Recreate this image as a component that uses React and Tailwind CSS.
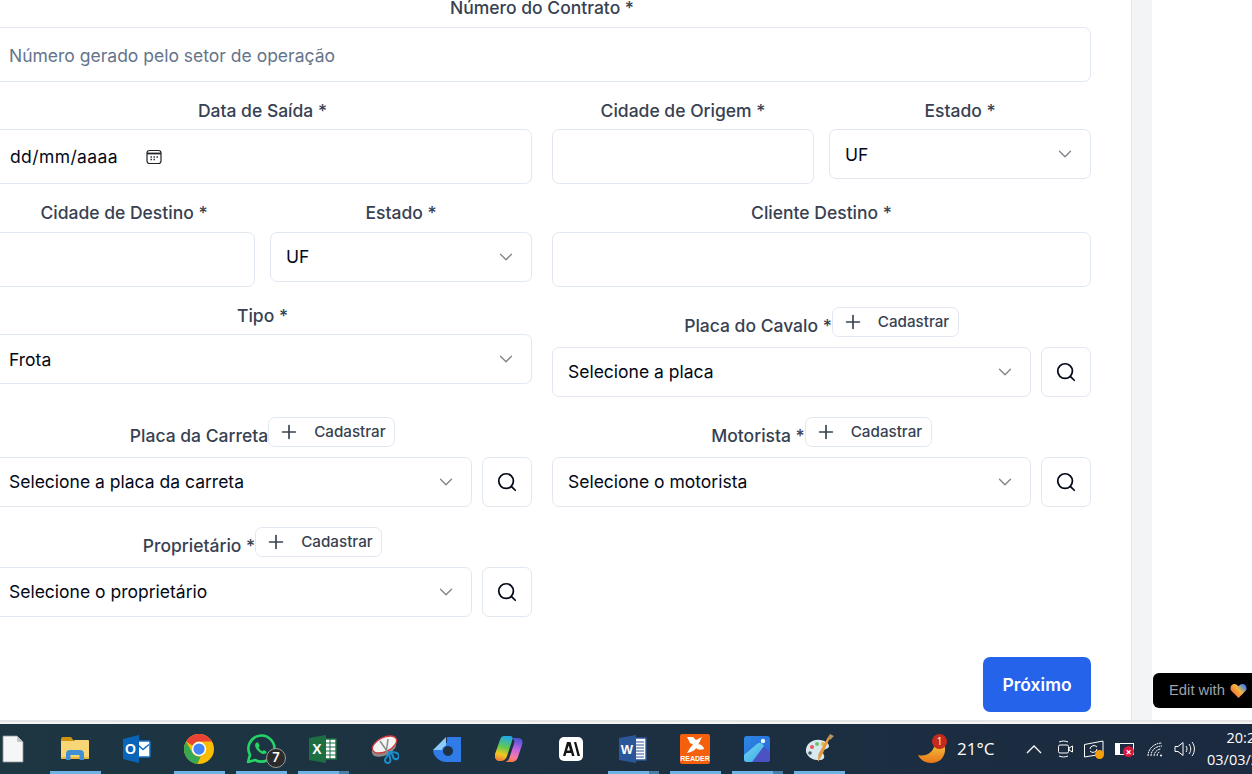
import React from "react";
import { ChevronDown, Plus, Search } from "lucide-react";

const Label = ({ children }) => (
  <label className="block h-6 text-center text-[17.5px] font-medium leading-6 text-[#374151]">{children}</label>
);
const Field = ({ placeholder }) => (
  <div className="flex h-[55px] items-center rounded-[7px] border border-[#e2e8f0] bg-white px-[15px] pt-[3px] text-[17.5px]">
    <span className="text-[#64748b]">{placeholder}</span>
  </div>
);
const Select = ({ value, shift }) => (
  <div className="flex h-[50px] min-w-0 flex-1 items-center justify-between rounded-[7px] border border-[#e2e8f0] bg-white pl-[15px] pr-[14px] text-[17.5px] text-[#020817]">
    <span className={shift ? "pt-[2px]" : ""}>{value}</span>
    <ChevronDown className="h-[22px] w-[22px] text-[#020817] opacity-50" strokeWidth={1.4} />
  </div>
);
const Cadastrar = () => (
  <div className="flex h-[30px] w-[127px] shrink-0 items-center gap-[14px] rounded-[7px] border border-[#e2e8f0] bg-white pl-[9px] text-[15.2px] font-medium text-[#374151]">
    <Plus className="h-[22px] w-[22px]" strokeWidth={1.8} />
    <span>Cadastrar</span>
  </div>
);
const SearchSelect = ({ label, value }) => (
  <div>
    <div className="flex h-[30px] items-start justify-center">
      <label className="mt-[7px] h-6 text-[17.5px] font-medium leading-6 text-[#374151]">{label}</label>
      <Cadastrar />
    </div>
    <div className="mt-[10px] flex gap-[10px]">
      <Select value={value} />
      <div className="flex h-[50px] w-[50px] shrink-0 items-center justify-center rounded-[7px] border border-[#e2e8f0] bg-white">
        <Search className="h-[22px] w-[22px] text-[#020817]" strokeWidth={1.9} />
      </div>
    </div>
  </div>
);

const Slot = ({ children, bar }) => (
  <div className="relative flex h-full w-[62px] shrink-0 items-center justify-center">
    {children}
    {bar && (
      <div className="absolute bottom-0 left-[6px] flex h-[3px]">
        <div className={bar === 2 ? "w-[41px] bg-[#6fb3e6]" : "w-[51px] bg-[#6fb3e6]"} />
        {bar === 2 && <div className="w-[10px] bg-[#4a7ea6]" />}
      </div>
    )}
  </div>
);

const Icons = {
  file: (
    <svg width="22" height="28" viewBox="0 0 22 28">
      <path d="M1 1h14l6 6v20H1z" fill="#f6f6f6" stroke="#8f979b" strokeWidth=".8" />
      <path d="M15 1l6 6h-6z" fill="#c4c4c4" />
    </svg>
  ),
  folder: (
    <svg width="28" height="24" viewBox="0 0 28 24">
      <path d="M0 2a2 2 0 0 1 2-2h8l3 4H0z" fill="#cf9414" />
      <path d="M0 4l12 0 2-1h13a1 1 0 0 1 1 1v18H0z" fill="#f8d675" />
      <path d="M0 20h28v2H0z" fill="#e8b93f" />
      <path d="M5 23v-6a4 4 0 0 1 4-4h10a4 4 0 0 1 4 4v6h-4.500v-5h-9v5z" fill="#3f8fd6" />
    </svg>
  ),
  outlook: (
    <svg width="28" height="28" viewBox="0 0 28 28">
      <rect x="13" y="6" width="14" height="16" rx="1" fill="#fff" stroke="#1170c4" strokeWidth="1.500" />
      <path d="M15 10l5 4.500 6-5" fill="none" stroke="#1170c4" strokeWidth="1.500" />
      <path d="M0 4l16-4v28L0 24z" fill="#0a64b8" />
      <text x="7.500" y="19" textAnchor="middle" fontSize="14" fontWeight="700" fill="#fff" fontFamily="'Liberation Sans', sans-serif">O</text>
    </svg>
  ),
  chrome: (
    <svg width="30" height="30" viewBox="0 0 48 48">
      <circle cx="24" cy="24" r="24" fill="#fbbc04" />
      <path d="M24 0a24 24 0 0 1 20.800 12H24a12 12 0 0 0-10.600 6.400L3.200 12A24 24 0 0 1 24 0z" fill="#ea4335" />
      <path d="M3.200 12l10.400 18A12 12 0 0 0 27 35.600L21 47.800A24 24 0 0 1 3.200 12z" fill="#34a853" />
      <circle cx="24" cy="24" r="11.500" fill="#fff" />
      <circle cx="24" cy="24" r="9" fill="#4285f4" />
    </svg>
  ),
  whatsapp: (
    <svg width="30" height="30" viewBox="0 0 30 30">
      <path d="M2 28l2-7.200A13 13 0 1 1 9.200 26z" fill="none" stroke="#25d366" strokeWidth="2.600" strokeLinejoin="round" />
      <path d="M10.500 8.500c-1.500 1-2 3-.6 5.600 1.400 2.600 4 5 6.800 5.800 1.800.5 3.600-.3 4.300-1.800l-3.100-2-1.500 1.200c-1.600-.6-3-2.100-3.800-3.800l1.200-1.500-1.700-3.500z" fill="#25d366" />
    </svg>
  ),
  excel: (
    <svg width="28" height="28" viewBox="0 0 28 28">
      <path d="M15 4h12v20H15z" fill="#fff" stroke="#1d7044" strokeWidth="1.400" />
      <path d="M21 4v20M15 8h12M15 12h12M15 16h12M15 20h12" stroke="#1d7044" strokeWidth="1" />
      <path d="M0 3l17-3v28L0 25z" fill="#1d6f42" />
      <text x="8" y="19" textAnchor="middle" fontSize="14" fontWeight="700" fill="#fff" fontFamily="'Liberation Sans', sans-serif">X</text>
    </svg>
  ),
  snip: (
    <svg width="28" height="29" viewBox="0 0 28 29">
      <ellipse cx="13" cy="13" rx="13" ry="7.500" transform="rotate(-26 13 13)" fill="#8b8b8b" />
      <ellipse cx="13.500" cy="9.500" rx="13" ry="7" transform="rotate(-26 13.500 9.500)" fill="#f4f4f4" stroke="#d23a3a" strokeWidth="1.300" />
      <path d="M9 6l9 13M17 4l-2 15" stroke="#8a8a8a" strokeWidth="1.500" />
      <path d="M18 18l-3 5a2.800 2.800 0 1 0 4.500 2.500zM19 17l3 3.500a3 3 0 1 0 4.500 -2c-1.500-1.500-5-1.500-7.500-1.500z" fill="none" stroke="#1c8ecf" strokeWidth="2" />
    </svg>
  ),
  dash: (
    <svg width="28" height="25" viewBox="0 0 28 25">
      <path fillRule="evenodd" d="M14 0H28V25H13A13 13 0 0 1 0 12.500H8L14 5zM15 9a5 5 0 1 0 .01 0z" fill="#2f7be8" />
      <path d="M0 13L13 0V8.500A6 6 0 0 0 9 13z" fill="#8ccaf9" />
    </svg>
  ),
  copilot: (
    <svg width="28" height="26" viewBox="0 0 28 26">
      <defs>
        <linearGradient id="cpa" x1=".6" y1="0" x2=".4" y2="1"><stop offset="0" stopColor="#1fa8e8" /><stop offset=".45" stopColor="#62c850" /><stop offset=".75" stopColor="#f4c81e" /><stop offset="1" stopColor="#f0813a" /></linearGradient>
        <linearGradient id="cpb" x1=".6" y1="0" x2=".4" y2="1"><stop offset="0" stopColor="#4b54d8" /><stop offset=".45" stopColor="#c564e0" /><stop offset=".8" stopColor="#f77da0" /><stop offset="1" stopColor="#f7773a" /></linearGradient>
      </defs>
      <path d="M17 2H23C27 2 28.500 5 27 9L23 21C22 24 20 26 16 26H9C12 26 14 24 15 20L19 8C20 5 19 3 17 2Z" fill="url(#cpb)" />
      <path d="M9 0H15C18 0 18 2 17 5L12 20C11 24 8 25 5 25H4C1 25 -1 22 0 18L5 4C6 1 7 0 9 0Z" fill="url(#cpa)" />
    </svg>
  ),
  anthropic: (
    <div className="flex h-6 w-6 items-center justify-center rounded-[5px] bg-white">
      <svg width="17" height="14" viewBox="0 0 17 14">
        <path fillRule="evenodd" d="M4 0h3.500l4 14H9l-.8-3H3.300l-.8 3H0zM5.700 3.500L4 8.500h3zM11 0h2.200L17 14h-2.500z" fill="#141413" />
      </svg>
    </div>
  ),
  word: (
    <svg width="28" height="28" viewBox="0 0 28 28">
      <path d="M14 3h13v22H14z" fill="#fff" stroke="#2b579a" strokeWidth="1.400" />
      <path d="M17 7h8M17 10h8M17 13h8M17 16h8M17 19h8M17 22h8" stroke="#2b579a" strokeWidth="1.200" />
      <path d="M0 3l17-3v28L0 25z" fill="#2b579a" />
      <text x="8" y="19" textAnchor="middle" fontSize="13" fontWeight="700" fill="#fff" fontFamily="'Liberation Sans', sans-serif">W</text>
    </svg>
  ),
  reader: (
    <div className="relative h-[30px] w-[30px] overflow-hidden rounded-[2px] bg-[#f4600c]">
      <svg width="30" height="21" viewBox="0 0 30 21" className="absolute left-0 top-0">
        <path d="M7 3h6l3 3 6-3-3 6c-2 6-6 9-12 10l3-5 3-3.500-3-1.500zM19 10c3 1 5 3 5 5-3 1-6 1-8-1z" fill="#fff" />
      </svg>
      <div className="absolute bottom-[1px] left-0 w-full text-center text-[7px] font-bold leading-[9px] text-white" style={{ fontFamily: "'Liberation Sans', sans-serif" }}>READER</div>
    </div>
  ),
  photos: (
    <svg width="26" height="26" viewBox="0 0 26 26">
      <defs>
        <linearGradient id="ph" x1="0" y1="0" x2="1" y2="1"><stop offset="0" stopColor="#2a8ae6" /><stop offset="1" stopColor="#2d62d4" /></linearGradient>
        <linearGradient id="ph2" x1="0" y1="0" x2="1" y2="1"><stop offset="0" stopColor="#7fd7f7" /><stop offset="1" stopColor="#2fa8e0" /></linearGradient>
      </defs>
      <rect width="26" height="26" rx="3" fill="url(#ph)" />
      <circle cx="19" cy="5" r="2.200" fill="#e9f4fd" />
      <path d="M17 8l9 8v7a3 3 0 0 1-3 3H8z" fill="#4a52c4" />
      <path d="M0 19L13 8q3-2.500 5.500 0L20 10 8 26H3a3 3 0 0 1-3-3z" fill="url(#ph2)" />
    </svg>
  ),
  paint: (
    <svg width="29" height="30" viewBox="0 0 29 30">
      <path d="M1 18C0 10 8 5 15 6c5 .7 9 3 9 6 0 4-6 2-6 6 0 3 2 3 1 6-2 4-15 3-18-6z" fill="#d8e8f1" />
      <circle cx="7" cy="13" r="2" fill="#e8584d" />
      <circle cx="12" cy="10" r="2" fill="#6cc070" />
      <circle cx="5" cy="19" r="1.800" fill="#4a5f6b" />
      <circle cx="18" cy="10" r="2" fill="#f1b63a" />
      <path d="M25 4L17 21l-4 7 .5-8L23 3z" fill="#e8993b" />
      <path d="M23 3l2-3 4 2-4 4z" fill="#b9915c" />
    </svg>
  ),
};

function Taskbar() {
  return (
    <div className="flex h-[50px] items-stretch overflow-hidden bg-gradient-to-r from-[#1d3642] to-[#1b2a40]">
      <div className="-ml-[18px] flex w-[868px] shrink-0">
        <Slot>{Icons.file}</Slot>
        <Slot bar={1}>{Icons.folder}</Slot>
        <Slot>{Icons.outlook}</Slot>
        <Slot bar={1}>{Icons.chrome}</Slot>
        <Slot bar={1}>
          {Icons.whatsapp}
          <div className="absolute left-[36px] top-[24px] flex h-5 w-5 items-center justify-center rounded-full border border-[#9a9a9a] bg-[#2b2b2b] text-[13px] font-semibold text-white">7</div>
        </Slot>
        <Slot bar={2}>{Icons.excel}</Slot>
        <Slot>{Icons.snip}</Slot>
        <Slot>{Icons.dash}</Slot>
        <Slot>{Icons.copilot}</Slot>
        <Slot>{Icons.anthropic}</Slot>
        <Slot bar={2}>{Icons.word}</Slot>
        <Slot bar={1}>{Icons.reader}</Slot>
        <Slot bar={2}>{Icons.photos}</Slot>
        <Slot bar={1}>{Icons.paint}</Slot>
      </div>
      <div className="ml-[68px] flex items-center text-white" style={{ fontFamily: "'Open Sans', sans-serif" }}>
        <div className="relative h-7 w-7">
          <svg width="28" height="28" viewBox="0 0 28 28">
            <defs><linearGradient id="mn" x1="0" y1="0" x2="0" y2="1"><stop offset="0" stopColor="#f4c33b" /><stop offset="1" stopColor="#e8751a" /></linearGradient></defs>
            <path d="M0 20C8 22 15 18 17 9L26 9C29 16 26 28 13 28C6 28 2 24 0 20Z" fill="url(#mn)" />
          </svg>
          <div className="absolute left-[14px] top-[-1px] flex h-[15px] w-[15px] items-center justify-center rounded-full bg-[#c42b1c] text-[10px] text-white">1</div>
        </div>
        <span className="ml-[11px] w-[38px] shrink-0 text-[17px]">21°C</span>
        <svg className="ml-[31px] shrink-0" width="16" height="10" viewBox="0 0 16 10"><path d="M1 9l7-7 7 7" fill="none" stroke="#fff" strokeWidth="1.300" /></svg>
        <svg className="ml-[16px] shrink-0" width="15" height="18" viewBox="0 0 15 18" fill="none" stroke="#fff" strokeWidth="1">
          <rect x="0.500" y="5" width="10" height="8" rx="1.500" />
          <path d="M11 8l3.500-2v6L11 10zM1 2c3-1.300 6-1.300 9 0M1 16c3 1.300 6 1.300 9 0" />
        </svg>
        <div className="relative ml-[11px] h-[18px] w-[20px] shrink-0">
          <svg width="20" height="18" viewBox="0 0 20 18" fill="none" stroke="#fff" strokeWidth="1">
            <path d="M0.500 4.500L19 1v13L0.500 17z" />
            <path d="M6 9a4 4 0 0 1 7-2M13 9a4 4 0 0 1-7 2" />
          </svg>
          <div className="absolute left-[11px] top-[10px] h-[9px] w-[9px] rounded-full bg-[#f59e0b]" />
        </div>
        <div className="relative ml-[11px] h-[12px] w-[19px] shrink-0 border border-white">
          <div className="h-full w-[4px] bg-white" />
          <div className="absolute left-[7px] top-[2px] flex h-[11px] w-[11px] items-center justify-center rounded-full bg-[#d6173b] text-[10px] font-bold leading-none">×</div>
        </div>
        <svg className="ml-[13px] shrink-0" width="17" height="15" viewBox="0 0 17 15" fill="none" stroke="#fff" strokeWidth="1">
          <path d="M1 14C1 7 7 1 15 1M4 14c0-5 4-10 11-10M7 14c0-3 3-7 7-7M10 14c0-2 1-4 3-4" strokeDasharray="2 .6" />
          <circle cx="14" cy="13.500" r="1" fill="#fff" stroke="none" />
        </svg>
        <svg className="ml-[10px] shrink-0" width="21" height="18" viewBox="0 0 21 18" fill="none" stroke="#fff" strokeWidth="1">
          <path d="M1 6.500h3L9 2.500v13l-5-4H1zM12 6c1.300 1.800 1.300 4.200 0 6M15 4c2.300 3 2.300 7 0 10M18 2c3.200 4 3.200 10 0 14" />
        </svg>
        <div className="ml-[12px] w-[76px] shrink-0 text-center text-[14.5px] leading-[22px]">
          <div>20:25</div>
          <div>03/03/2025</div>
        </div>
      </div>
    </div>
  );
}

export default function App() {
  return (
    <div className="relative h-[774px] w-[1252px] overflow-hidden bg-white" style={{ fontFamily: "Inter, sans-serif" }}>
      <div className="flex h-[720px]">
        <div className="w-[1131px] shrink-0 overflow-hidden bg-white">
          <div className="-ml-[7px] -mt-[4px] w-[1098px]">
            <div>
              <Label>Número do Contrato *</Label>
              <div className="mt-[7px]"><Field placeholder="Número gerado pelo setor de operação" /></div>
            </div>
            <div className="mt-[17px] grid grid-cols-2 gap-x-5">
              <div>
                <Label>Data de Saída *</Label>
                <div className="mt-[6px] flex h-[55px] items-center gap-[28px] rounded-[7px] border border-[#e2e8f0] bg-white pl-[16px] text-[17.5px] tracking-[0.4px] text-[#020817]">
                  <span className="pt-[2px]">dd/mm/aaaa</span>
                  <svg width="16" height="16" viewBox="0 0 16 16" fill="none">
                    <rect x="1" y="1.500" width="14" height="13" rx="2.500" stroke="#1f2328" strokeWidth="1.200" />
                    <path d="M1 4.500h14" stroke="#1f2328" strokeWidth="1.800" />
                    <path d="M4.500 8h1.400M7.500 8h1.400M10.500 8h1.400M4.500 10.500h1.400M7.500 10.500h1.400" stroke="#1f2328" strokeWidth="1.300" />
                  </svg>
                </div>
              </div>
              <div className="flex gap-[15px]">
                <div className="w-[262px]">
                  <Label>Cidade de Origem *</Label>
                  <div className="mt-[6px]"><Field /></div>
                </div>
                <div className="flex-1">
                  <Label>Estado *</Label>
                  <div className="mt-[6px] flex"><Select value="UF" shift /></div>
                </div>
              </div>
            </div>
            <div className="mt-[17px] grid grid-cols-2 gap-x-5">
              <div className="flex gap-[15px]">
                <div className="w-[262px]">
                  <Label>Cidade de Destino *</Label>
                  <div className="mt-[7px]"><Field /></div>
                </div>
                <div className="flex-1">
                  <Label>Estado *</Label>
                  <div className="mt-[7px] flex"><Select value="UF" /></div>
                </div>
              </div>
              <div>
                <Label>Cliente Destino *</Label>
                <div className="mt-[7px]"><Field /></div>
              </div>
            </div>
            <div className="mt-[17px] grid grid-cols-2 gap-x-5 gap-y-[20px]">
              <div>
                <Label>Tipo *</Label>
                <div className="mt-[6px] flex"><Select value="Frota" shift /></div>
              </div>
              <div className="mt-[3px]"><SearchSelect label="Placa do Cavalo *" value="Selecione a placa" /></div>
              <SearchSelect label="Placa da Carreta" value="Selecione a placa da carreta" />
              <SearchSelect label="Motorista *" value="Selecione o motorista" />
              <SearchSelect label="Proprietário *" value="Selecione o proprietário" />
            </div>
            <div className="mt-[40px] flex justify-end">
              <div className="flex h-[55px] w-[108px] items-center justify-center rounded-[7px] bg-[#2563eb] pt-[2px] text-[17.5px] font-semibold text-white">Próximo</div>
            </div>
          </div>
        </div>
        <div className="w-[21px] shrink-0 border-l border-[#e5e7eb] bg-[#f3f4f6]" />
        <div className="flex-1 bg-white" />
      </div>
      <div className="h-[4px] border-t-2 border-[#e4e4e4] bg-[#f4f4f4]" />
      <Taskbar />
      <div className="absolute left-[1153px] top-[673px] flex h-[35px] w-[120px] items-center gap-[5px] rounded-md bg-black pl-[16px] text-[14.8px] text-[#9ca3af]" style={{ fontFamily: "'Liberation Sans', sans-serif" }}>
        <span>Edit with</span>
        <svg width="17" height="15" viewBox="0 0 18 16">
          <defs><linearGradient id="ht" x1="1" y1=".1" x2=".1" y2=".8"><stop offset=".1" stopColor="#3b82f6" /><stop offset=".5" stopColor="#f2b63c" /><stop offset="1" stopColor="#f4603a" /></linearGradient></defs>
          <path d="M9 16L1.500 8.500C-1 5.500 1 1 4.800 1 6.800 1 8 2 9 3.500 10 2 11.200 1 13.200 1 17 1 19 5.500 16.500 8.500z" fill="url(#ht)" />
        </svg>
      </div>
    </div>
  );
}
